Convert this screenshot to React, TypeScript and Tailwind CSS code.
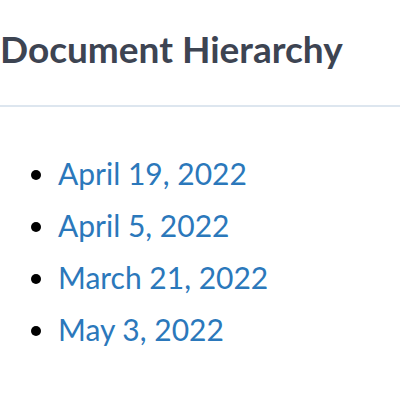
import React from "react";

const dates = ["April 19, 2022", "April 5, 2022", "March 21, 2022", "May 3, 2022"];

export default function App() {
  return (
    <div className="w-[400px] h-[400px] bg-white overflow-hidden" style={{ fontFamily: "Lato, 'Noto Sans', sans-serif" }}>
      <div className="pt-[28px] pb-[35px]">
        <h1 className="text-[37px] font-bold leading-[42px] text-[#3d4452] whitespace-nowrap">Document Hierarchy</h1>
      </div>
      <div className="h-[2px] bg-[#dde6ef]" />
      <ul className="list-disc pl-[58px] pt-[40px] text-[30px] leading-[52px] marker:text-black">
        {dates.map((d) => (
          <li key={d}>
            <a className="text-[#2b78bb]">{d}</a>
          </li>
        ))}
      </ul>
    </div>
  );
}
